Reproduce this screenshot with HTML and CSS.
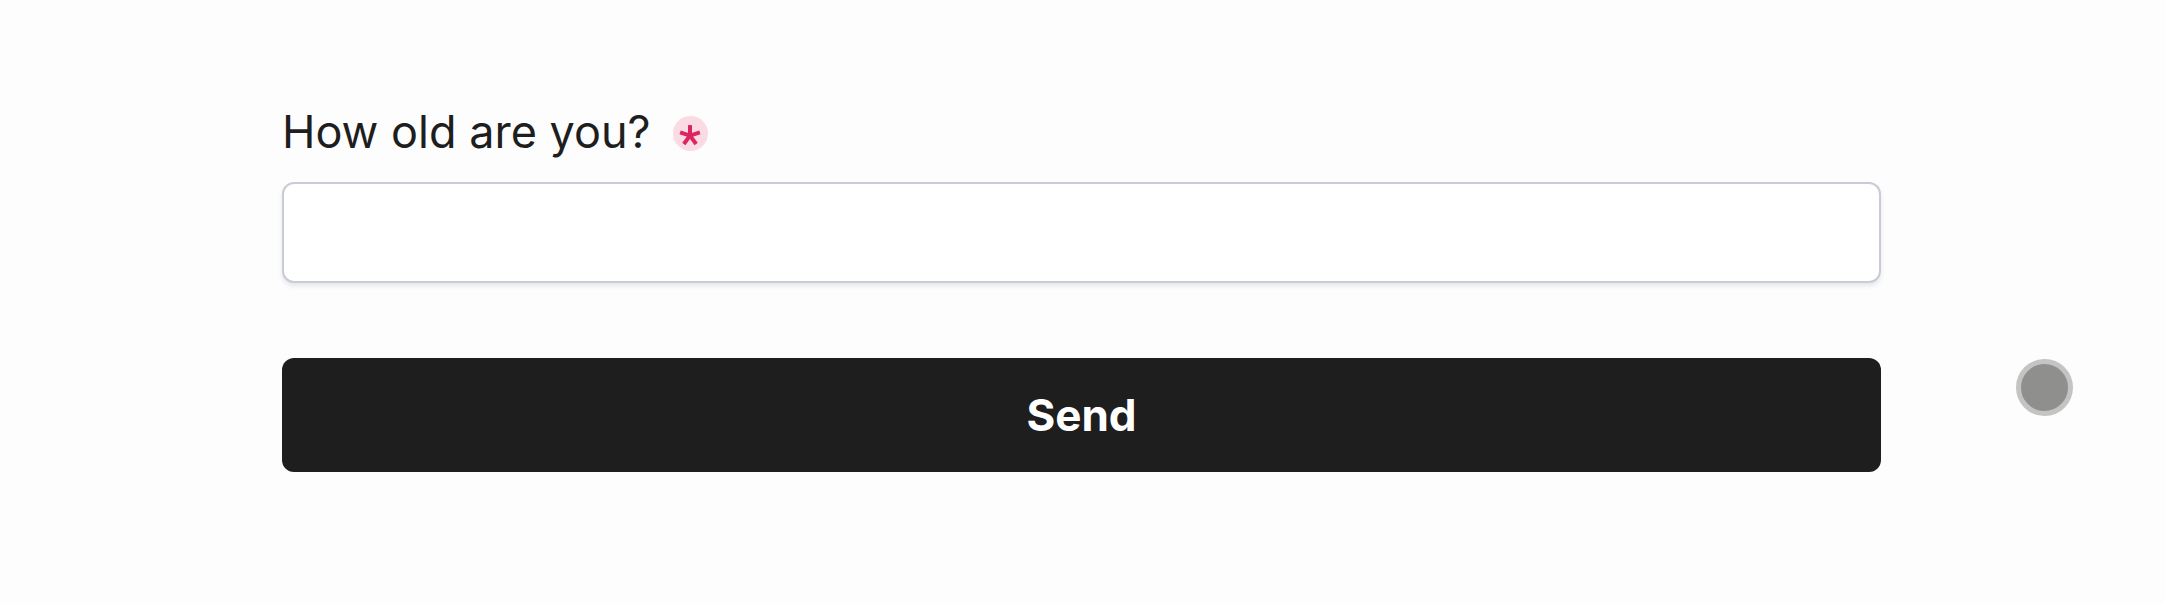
FILE: index.html
```html
<!DOCTYPE html>
<html lang="en">
<head>
<meta charset="utf-8">
<title>Form</title>
<link rel="stylesheet" href="styles.css">
</head>
<body>
<main class="page">
  <form class="form">
    <label class="label" for="age">
      <span class="label-text">How old are you?</span>
      <span class="required" aria-label="required">
        <svg viewBox="0 0 20 20" width="22" height="22" aria-hidden="true">
          <g stroke="currentColor" stroke-width="3.6" stroke-linecap="butt">
            <line x1="10" y1="10.5" x2="10" y2="1"/>
            <line x1="10" y1="10.5" x2="19" y2="7.6"/>
            <line x1="10" y1="10.5" x2="1" y2="7.6"/>
            <line x1="10" y1="10.5" x2="15.6" y2="18.2"/>
            <line x1="10" y1="10.5" x2="4.4" y2="18.2"/>
          </g>
        </svg>
      </span>
    </label>
    <input class="input" id="age" type="text">
    <button class="send" type="button">Send</button>
  </form>
  <div class="dot" aria-hidden="true"></div>
</main>
</body>
</html>
```

FILE: styles.css
```css
html, body {
  margin: 0;
  padding: 0;
  background: #fdfdfd;
}
body {
  font-family: "Inter", "Noto Sans", sans-serif;
  color: #1e1e1e;
}
.page {
  position: relative;
  width: 2165px;
  height: 603px;
}
.form {
  display: flex;
  flex-direction: column;
  width: 1599px;
  padding: 104px 0 0 282px;
}
.label {
  display: flex;
  align-items: center;
  gap: 22px;
  font-size: 45px;
  line-height: 56px;
  height: 56px;
}
.required {
  display: flex;
  align-items: center;
  justify-content: center;
  width: 35px;
  height: 35px;
  border-radius: 50%;
  background: #fadbe4;
  color: #dd2463;
  margin-top: 3px;
}
.required svg {
  display: block;
  margin-top: 2px;
}
.input {
  box-sizing: border-box;
  margin-top: 22px;
  height: 101px;
  width: 100%;
  border: 2px solid #c8ccd6;
  border-radius: 12px;
  background: #ffffff;
  box-shadow: 0 3px 4px rgba(30, 40, 60, 0.10);
  font: inherit;
  outline: none;
}
.send {
  margin-top: 75px;
  height: 114px;
  width: 100%;
  border: 0;
  border-radius: 12px;
  background: #1e1e1e;
  color: #ffffff;
  font-family: "Inter", "Noto Sans", sans-serif;
  font-weight: 700;
  font-size: 44px;
  cursor: pointer;
}
.dot {
  position: absolute;
  left: 2016px;
  top: 359px;
  width: 47px;
  height: 47px;
  border-radius: 50%;
  background: #8f8f8e;
  border: 5px solid #c4c4c4;
}
```
